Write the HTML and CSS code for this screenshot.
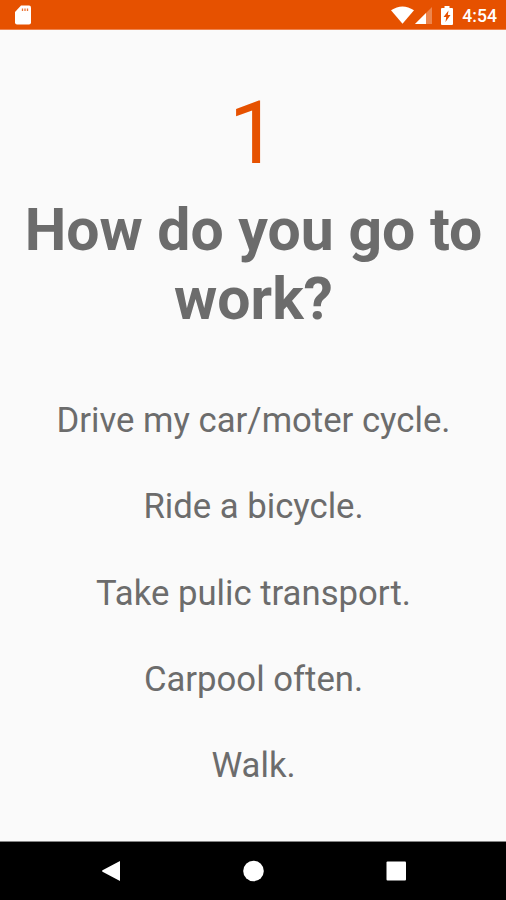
FILE: index.html
```html
<!DOCTYPE html>
<html lang="en">
<head>
    <meta charset="UTF-8">
    <meta name="viewport" content="width=device-width, initial-scale=1.0">
    <title>Survey</title>
    <link rel="stylesheet" href="styles.css">
</head>
<body>
    <!-- Status bar -->
    <header class="status-bar">
        <svg class="sd-icon" width="16" height="20" viewBox="0 0 16 20">
            <path fill="#fff" d="M6 0.500h8q2 0 2 2v15q0 2-2 2H2q-2 0-2-2V7z"/>
            <path stroke="#e65100" stroke-width="1.3" opacity=".8" d="M7.500 3.500v2.500M10 3.500v2.500M12.500 3.500v2.500"/>
        </svg>
        <div class="status-right">
            <svg class="wifi-icon" width="23" height="18" viewBox="0 0 24 18">
                <path fill="#fff" d="M0 4Q12-4 24 4L12 18z"/>
            </svg>
            <svg class="signal-icon" width="17" height="17" viewBox="0 0 17 17">
                <path fill="#fff" opacity=".3" d="M17 0v17H0z"/>
                <path fill="#fff" d="M11 6v11H0z"/>
            </svg>
            <svg class="battery-icon" width="12" height="19" viewBox="0 0 12 19">
                <path fill="#fff" d="M3.500 0h5v2H11q1 0 1 1v15q0 1-1 1H1q-1 0-1-1V3q0-1 1-1h2.500z"/>
                <path fill="#e65100" d="M7.500 4.500L6.800 9H9.500L4.500 16l.7-5H2.500z"/>
            </svg>
            <span class="clock">4:54</span>
        </div>
    </header>

    <!-- Question and answers -->
    <main class="question">
        <div class="number">1</div>
        <h1>How do you go to work?</h1>
        <ul class="answers">
            <li>Drive my car/moter cycle.</li>
            <li>Ride a bicycle.</li>
            <li>Take pulic transport.</li>
            <li>Carpool often.</li>
            <li>Walk.</li>
        </ul>
    </main>

    <!-- Navigation bar -->
    <nav class="nav-bar">
        <svg width="20" height="22" viewBox="0 0 20 22"><path fill="#fff" d="M19.500 1.200q.5-.3.500.3v19q0 .6-.5.300L2.500 11.700q-1-.7 0-1.400z"/></svg>
        <svg width="22" height="22" viewBox="0 0 22 22"><circle cx="11.500" cy="11" r="10.300" fill="#fff"/></svg>
        <svg width="20" height="20" viewBox="0 0 20 20"><rect width="19.500" height="19" x=".5" y=".5" rx="1" fill="#fff"/></svg>
    </nav>
</body>
</html>
```

FILE: styles.css
```css
* {
    box-sizing: border-box;
}

body {
    margin: 0;
    height: 900px;
    display: flex;
    flex-direction: column;
    background-color: #fafafa;
    color: #6c6c6c;
    font-family: Roboto, sans-serif;
    overflow: hidden;
}

.status-bar {
    height: 30px;
    padding: 1px 9px 0 15px;
    display: flex;
    align-items: center;
    justify-content: space-between;
    border-bottom: 1px solid #ee8450;
    background-color: #e65100;
    color: white;
}

.status-right {
    display: flex;
    align-items: center;
}

.signal-icon {
    margin: 1px 0 0 1px;
}

.battery-icon {
    margin-left: 9px;
}

.clock {
    margin: 1px 0 0 9px;
    font-size: 17.6px;
    font-weight: 500;
}

.question {
    flex: 1;
    padding-top: 52px;
    text-align: center;
}

.number {
    padding-left: 1px;
    font-size: 88px;
    line-height: 102px;
    color: #e65100;
}

h1 {
    margin: 11px 0 0;
    padding-left: 1px;
    font-size: 58.9px;
    line-height: 69px;
    font-weight: bold;
}

.answers {
    margin: 44px 0 0;
    padding: 0 0 0 1px;
    list-style: none;
    font-size: 34.7px;
}

.answers li {
    height: 86.3px;
    line-height: 86.3px;
}

.nav-bar {
    height: 59px;
    padding: 0 100px;
    display: flex;
    align-items: center;
    justify-content: space-between;
    border-top: 1px solid #858585;
    background-color: black;
}
```
